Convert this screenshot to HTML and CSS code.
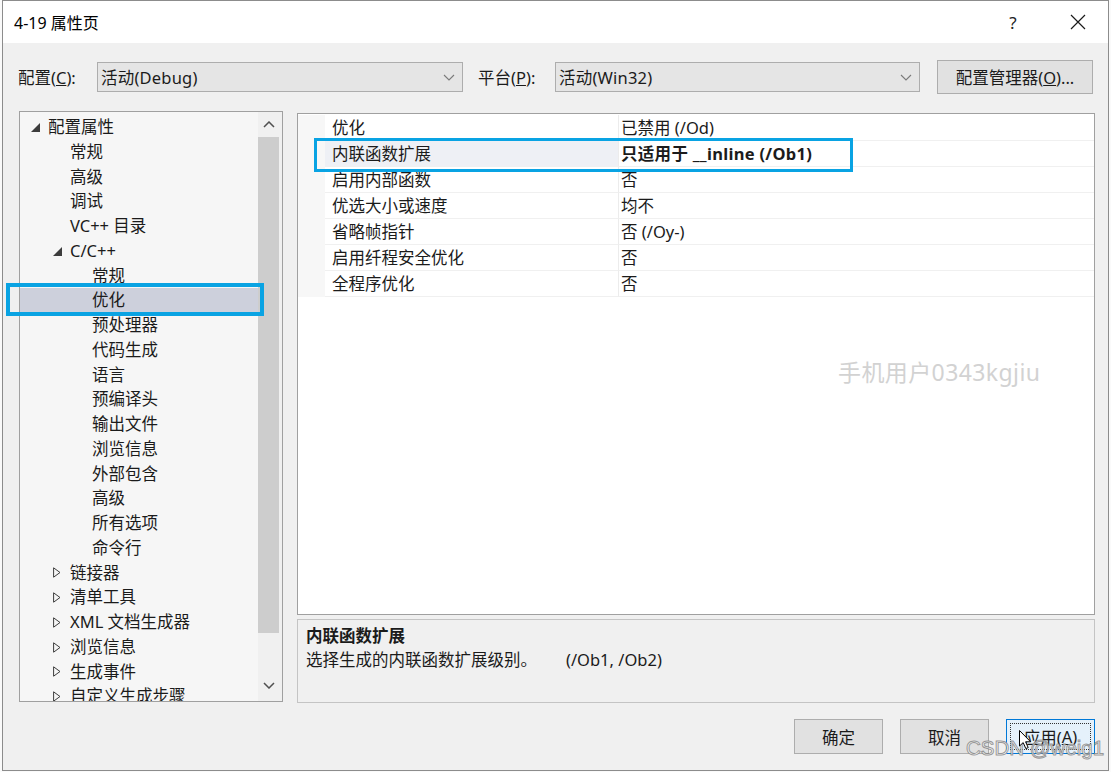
FILE: index.html
```html
<!DOCTYPE html>
<html>
<head>
    <meta charset="utf-8" />
    <link rel="stylesheet" href="styles.css">
</head>
<body>
<div class="dialog">
    <div class="titlebar">
        <span class="title">4-19 属性页</span>
        <span class="help">?</span>
        <span class="close">
            <svg width="16" height="16" viewBox="0 0 16 16"><path d="M1 1L15 15M15 1L1 15" stroke="#1a1a1a" stroke-width="1.2" fill="none"/></svg>
        </span>
    </div>
    <div class="content">
        <div class="config-row">
            <label class="lbl lbl-config">配置(<u>C</u>):</label>
            <div class="combo combo-config">
                <span>活动(Debug)</span>
                <svg width="12" height="7" viewBox="0 0 12 7"><path d="M1 1L6 6L11 1" stroke="#7a7a7a" stroke-width="1.1" fill="none"/></svg>
            </div>
            <label class="lbl lbl-platform">平台(<u>P</u>):</label>
            <div class="combo combo-platform">
                <span>活动(Win32)</span>
                <svg width="12" height="7" viewBox="0 0 12 7"><path d="M1 1L6 6L11 1" stroke="#7a7a7a" stroke-width="1.1" fill="none"/></svg>
            </div>
            <button class="btn btn-manager">配置管理器(<u>O</u>)...</button>
        </div>

        <div class="main">
            <div class="tree">
                <div class="tree-list">
                    <div class="node lvl0"><span class="tw"><svg width="9" height="9" viewBox="0 0 9 9"><path d="M0 9L9 0L9 9Z" fill="#3c3c3c"/></svg></span>配置属性</div>
                    <div class="node lvl1"><span class="tw"></span>常规</div>
                    <div class="node lvl1"><span class="tw"></span>高级</div>
                    <div class="node lvl1"><span class="tw"></span>调试</div>
                    <div class="node lvl1"><span class="tw"></span>VC++ 目录</div>
                    <div class="node lvl1"><span class="tw"><svg width="9" height="9" viewBox="0 0 9 9"><path d="M0 9L9 0L9 9Z" fill="#3c3c3c"/></svg></span>C/C++</div>
                    <div class="node lvl2"><span class="tw"></span>常规</div>
                    <div class="node lvl2 selected"><span class="tw"></span>优化</div>
                    <div class="node lvl2"><span class="tw"></span>预处理器</div>
                    <div class="node lvl2"><span class="tw"></span>代码生成</div>
                    <div class="node lvl2"><span class="tw"></span>语言</div>
                    <div class="node lvl2"><span class="tw"></span>预编译头</div>
                    <div class="node lvl2"><span class="tw"></span>输出文件</div>
                    <div class="node lvl2"><span class="tw"></span>浏览信息</div>
                    <div class="node lvl2"><span class="tw"></span>外部包含</div>
                    <div class="node lvl2"><span class="tw"></span>高级</div>
                    <div class="node lvl2"><span class="tw"></span>所有选项</div>
                    <div class="node lvl2"><span class="tw"></span>命令行</div>
                    <div class="node lvl1"><span class="tw"><svg width="8" height="11" viewBox="0 0 8 11"><path d="M0.6 0.8L7 5.5L0.6 10.2Z" stroke="#3c3c3c" stroke-width="1" fill="none"/></svg></span>链接器</div>
                    <div class="node lvl1"><span class="tw"><svg width="8" height="11" viewBox="0 0 8 11"><path d="M0.6 0.8L7 5.5L0.6 10.2Z" stroke="#3c3c3c" stroke-width="1" fill="none"/></svg></span>清单工具</div>
                    <div class="node lvl1"><span class="tw"><svg width="8" height="11" viewBox="0 0 8 11"><path d="M0.6 0.8L7 5.5L0.6 10.2Z" stroke="#3c3c3c" stroke-width="1" fill="none"/></svg></span>XML 文档生成器</div>
                    <div class="node lvl1"><span class="tw"><svg width="8" height="11" viewBox="0 0 8 11"><path d="M0.6 0.8L7 5.5L0.6 10.2Z" stroke="#3c3c3c" stroke-width="1" fill="none"/></svg></span>浏览信息</div>
                    <div class="node lvl1"><span class="tw"><svg width="8" height="11" viewBox="0 0 8 11"><path d="M0.6 0.8L7 5.5L0.6 10.2Z" stroke="#3c3c3c" stroke-width="1" fill="none"/></svg></span>生成事件</div>
                    <div class="node lvl1"><span class="tw"><svg width="8" height="11" viewBox="0 0 8 11"><path d="M0.6 0.8L7 5.5L0.6 10.2Z" stroke="#3c3c3c" stroke-width="1" fill="none"/></svg></span>自定义生成步骤</div>
                </div>
                <div class="vscroll">
                    <div class="arrow arrow-up"><svg width="12" height="7" viewBox="0 0 12 7"><path d="M1 6L6 1L11 6" stroke="#505050" stroke-width="1.5" fill="none"/></svg></div>
                    <div class="thumb"></div>
                    <div class="track"></div>
                    <div class="arrow arrow-down"><svg width="12" height="7" viewBox="0 0 12 7"><path d="M1 1L6 6L11 1" stroke="#505050" stroke-width="1.5" fill="none"/></svg></div>
                </div>
            </div>

            <div class="right">
                <div class="grid">
                    <div class="prow"><div class="gutter"></div><div class="pname">优化</div><div class="pval">已禁用 (/Od)</div></div>
                    <div class="prow"><div class="gutter"></div><div class="pname current">内联函数扩展</div><div class="pval bold">只适用于 __inline (/Ob1)</div></div>
                    <div class="prow"><div class="gutter"></div><div class="pname">启用内部函数</div><div class="pval">否</div></div>
                    <div class="prow"><div class="gutter"></div><div class="pname">优选大小或速度</div><div class="pval">均不</div></div>
                    <div class="prow"><div class="gutter"></div><div class="pname">省略帧指针</div><div class="pval">否 (/Oy-)</div></div>
                    <div class="prow"><div class="gutter"></div><div class="pname">启用纤程安全优化</div><div class="pval">否</div></div>
                    <div class="prow"><div class="gutter"></div><div class="pname">全程序优化</div><div class="pval">否</div></div>
                </div>
                <div class="desc">
                    <div class="desc-title">内联函数扩展</div>
                    <div class="desc-text">选择生成的内联函数扩展级别。<span class="desc-flags">(/Ob1, /Ob2)</span></div>
                </div>
            </div>
        </div>

        <div class="footer">
            <button class="btn btn-action">确定</button>
            <button class="btn btn-action">取消</button>
            <button class="btn btn-action btn-focus"><span class="focus-ring">应用(<u>A</u>)</span></button>
        </div>
    </div>

    <!-- annotation boxes and overlays -->
    <div class="mark mark-tree"></div>
    <div class="mark mark-grid"></div>
    <div class="watermark">手机用户0343kgjiu</div>
    <div class="csdn">CSDN @weig1</div>
    <svg class="cursor" width="13" height="20" viewBox="0 0 13 20"><path d="M0.5 0.5L0.5 16L4.2 12.6L6.8 18.6L9.2 17.6L6.6 11.8L11.6 11.8Z" fill="#fff" stroke="#000" stroke-width="1"/></svg>
</div>
</body>
</html>
```

FILE: styles.css
```css
*{
    box-sizing: border-box;
}
body{
    margin: 0;
    background: #fafafa;
    font-family: "Noto Sans", "Noto Sans CJK SC", sans-serif;
    font-size: 16.5px;
    color: #1b1b1b;
}
.dialog{
    position: relative;
    margin-left: 2px;
    width: 1107px;
    height: 771px;
    border: 1px solid #8c8c8c;
    background: #f0f0f0;
    display: flex;
    flex-direction: column;
}
.titlebar{
    height: 42px;
    background: #fff;
    display: flex;
    align-items: center;
    padding-left: 11px;
    padding-right: 7px;
}
.title{
    font-size: 16px;
    color: #000;
}
.help{
    margin-left: auto;
    width: 30px;
    text-align: center;
    font-size: 17px;
    color: #222;
}
.close{
    margin-left: 27px;
    width: 46px;
    display: flex;
    justify-content: center;
}
.content{
    flex: 1;
    display: flex;
    flex-direction: column;
    padding: 17px 13px 0 15px;
}
.config-row{
    height: 34px;
    display: flex;
    align-items: center;
}
.lbl{
    white-space: nowrap;
}
.lbl-config{
    width: 79px;
}
.lbl-platform{
    width: 77px;
    margin-left: 15px;
}
.combo{
    height: 30px;
    border: 1px solid #adadad;
    background: #e5e5e5;
    display: flex;
    align-items: center;
    justify-content: space-between;
    padding: 0 7px 0 3px;
    letter-spacing: 0.2px;
}
.combo-config{
    width: 366px;
}
.combo-platform{
    width: 365px;
}
.btn{
    font-family: inherit;
    font-size: 16.5px;
    color: #1b1b1b;
    background: #e1e1e1;
    border: 1px solid #adadad;
    padding: 0;
}
.btn-manager{
    margin-left: 17px;
    width: 156px;
    height: 34px;
}
.main{
    margin-top: 17px;
    height: 592px;
    display: flex;
    padding-left: 1px;
}
.tree{
    width: 264px;
    height: 591px;
    border: 1px solid #a0a0a0;
    background: #f6f6f6;
    display: flex;
}
.tree-list{
    flex: 1;
    overflow: hidden;
    padding-top: 3px;
}
.node{
    height: 24.76px;
    line-height: 24.76px;
    display: flex;
    align-items: center;
    white-space: nowrap;
}
.node.selected{
    background: #cdd0dc;
}
.tw{
    width: 17px;
    height: 24px;
    display: flex;
    align-items: center;
    flex-shrink: 0;
}
.lvl0{
    padding-left: 11px;
}
.lvl1{
    padding-left: 33px;
}
.lvl2{
    padding-left: 55px;
}
.vscroll{
    width: 24px;
    display: flex;
    flex-direction: column;
    background: #f0f0f0;
    padding-right: 3px;
}
.arrow{
    display: flex;
    align-items: center;
    justify-content: center;
}
.arrow-up{
    height: 25px;
}
.arrow-down{
    height: 32px;
}
.thumb{
    height: 496px;
    background: #cdcdcd;
}
.track{
    flex: 1;
}
.right{
    margin-left: 14px;
    width: 798px;
    display: flex;
    flex-direction: column;
    padding-top: 2px;
}
.grid{
    flex: 1;
    border: 1px solid #a0a0a0;
    background: #fff;
    padding-top: 1px;
}
.prow{
    display: flex;
    height: 26px;
}
.gutter{
    width: 27px;
    background: #f7f7f7;
}
.pname{
    width: 293px;
    padding-left: 7px;
    line-height: 25px;
    border-bottom: 1px solid #f0f0f0;
}
.pname.current{
    background: #eef0f5;
}
.pval{
    flex: 1;
    padding-left: 2px;
    line-height: 25px;
    border-left: 1px solid #ececec;
    border-bottom: 1px solid #f0f0f0;
}
.bold{
    font-weight: 700;
    letter-spacing: 0.3px;
}
.desc{
    margin-top: 4px;
    height: 84px;
    border: 1px solid #c4c4c4;
    background: #f0f0f0;
    padding: 4px 8px 0;
    line-height: 24px;
}
.desc-title{
    font-weight: 700;
}
.desc-flags{
    margin-left: 29px;
}
.footer{
    margin-top: 16px;
    display: flex;
    justify-content: flex-end;
    gap: 17px;
}
.btn-action{
    width: 89px;
    height: 35px;
}
.btn-focus{
    background: #e5f1fb;
    border-color: #0078d7;
    padding: 3px;
}
.focus-ring{
    display: flex;
    align-items: center;
    justify-content: center;
    height: 100%;
    border: 1px dotted #333;
}
.mark{
    position: absolute;
    border: 4px solid #09a3e3;
}
.mark-tree{
    left: 3px;
    top: 282px;
    width: 258px;
    height: 33px;
}
.mark-grid{
    left: 311px;
    top: 137px;
    width: 539px;
    height: 34px;
    border-width: 3px;
}
.watermark{
    position: absolute;
    left: 835px;
    top: 353px;
    font-size: 23px;
    letter-spacing: 0.4px;
    color: #d2d2d2;
}
.csdn{
    position: absolute;
    left: 963px;
    top: 735px;
    font-family: "Liberation Sans", sans-serif;
    font-size: 20.5px;
    color: rgba(255, 255, 255, 0.85);
    -webkit-text-stroke: 1px rgba(120, 120, 120, 0.75);
}
.cursor{
    position: absolute;
    left: 1016px;
    top: 729px;
}
```
